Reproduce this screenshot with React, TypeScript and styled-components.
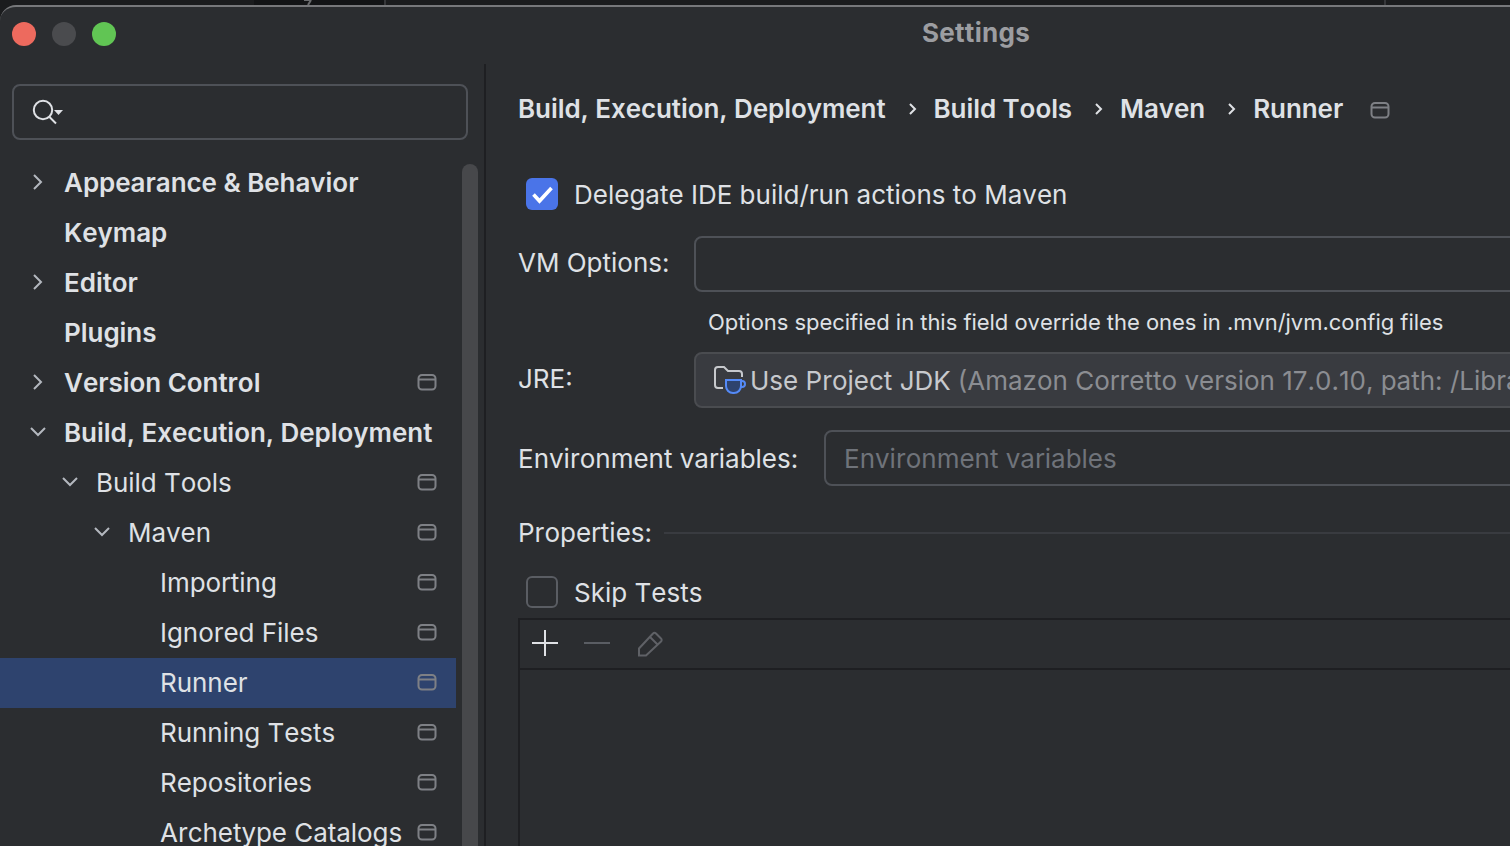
import React from 'react';
import styled, { createGlobalStyle } from 'styled-components';

const Global = createGlobalStyle`
  html, body { margin: 0; padding: 0; background: #1b1c1e; overflow: hidden; }
  * { box-sizing: border-box; }
`;

const Page = styled.div`
  width: 1510px; height: 846px; overflow: hidden; display: flex; flex-direction: column;
  font-family: Inter, "Noto Sans", sans-serif; font-size: 26px; color: #dfe1e5; background: #1b1c1e; font-kerning: none;
`;
const BackStrip = styled.div`height: 5px; flex: none; display: flex; background: #1b1c1e;`;
const StripCell = styled.div<{ $w: number; $dark?: boolean; $line?: boolean }>`
  width: ${p => p.$w}px; height: 5px; flex: none; overflow: hidden; padding-left: 48px;
  background: ${p => (p.$dark ? '#131416' : 'transparent')};
  border-right: ${p => (p.$line ? '2px solid #36373a' : 'none')};
`;
const Win = styled.div`
  flex: 1; min-height: 0; display: flex; flex-direction: column; background: #2b2d30;
  border-top: 2px solid #77787b; border-top-left-radius: 16px; overflow: hidden;
`;
const TitleBar = styled.div`height: 57px; flex: none; position: relative; display: flex; align-items: center; padding-left: 12px; gap: 16px;`;
const Light = styled.span<{ $c: string }>`width: 24px; height: 24px; border-radius: 50%; background: ${p => p.$c}; flex: none; position: relative; top: -2px;`;
const Title = styled.div`
  position: absolute; left: 484px; right: 0; top: 10px; text-align: center; line-height: 32px; font-weight: 700; color: #9c9da1; padding-right: 42px; letter-spacing: 0.3px;
`;
const Body = styled.div`flex: 1; min-height: 0; display: flex;`;
const Sidebar = styled.aside`width: 486px; flex: none; border-right: 2px solid #1e1f22; display: flex; flex-direction: column; padding-top: 20px; overflow: hidden;`;
const Search = styled.div`
  margin-left: 12px; width: 456px; height: 56px; flex: none; border: 2px solid #4e5157; border-radius: 8px;
  display: flex; align-items: center; padding-left: 17px;
`;
const TreeWrap = styled.div`flex: 1; min-height: 0; display: flex; margin-top: 18px;`;
const Tree = styled.div`width: 456px; flex: none;`;
const Row = styled.div<{ $sel?: boolean; $depth: number }>`
  height: 50px; display: flex; align-items: center; padding-left: ${p => 64 + p.$depth * 32}px; position: relative;
  background: ${p => (p.$sel ? '#2e436e' : 'transparent')}; white-space: nowrap;
`;
const RowLabel = styled.span<{ $b?: boolean }>`font-weight: ${p => (p.$b ? 600 : 400)}; line-height: 32px; letter-spacing: -0.04px;`;
const Arrow = styled.svg<{ $depth: number }>`position: absolute; left: ${p => 28 + p.$depth * 32}px; top: 14px; width: 20px; height: 20px;`;
const Pin = styled.svg`position: absolute; left: 417px; top: 14px; width: 20px; height: 20px;`;
const Scroll = styled.div`width: 16px; margin-left: 6px; margin-top: 6px; background: #47484b; border-radius: 8px 8px 0 0;`;

const Main = styled.main`flex: 1; min-width: 0; overflow: hidden; padding: 25px 0 0 32px; display: flex; flex-direction: column;`;
const Crumbs = styled.div`display: flex; align-items: center; height: 40px; font-weight: 600; white-space: nowrap; letter-spacing: -0.07px;`;
const Crumb = styled.span`line-height: 32px;`;
const Sep = styled.svg`width: 16px; height: 16px; margin: 0 13px 0 19px; flex: none;`;
const CrumbPin = styled.svg`width: 20px; height: 20px; margin-left: 27px; position: relative; top: 1px;`;
const CheckRow = styled.div<{ $top: number }>`display: flex; align-items: center; gap: 16px; padding-left: 8px; height: 32px; flex: none; margin-top: ${p => p.$top}px; white-space: nowrap;`;
const Box = styled.span<{ $on?: boolean }>`
  width: 32px; height: 32px; border-radius: 6px; flex: none; display: flex; align-items: center; justify-content: center;
  background: ${p => (p.$on ? '#4a74e8' : 'transparent')}; border: ${p => (p.$on ? 'none' : '2px solid #5a5d63')};
`;
const FieldRow = styled.div<{ $top: number }>`display: flex; align-items: center; height: 56px; flex: none; margin-top: ${p => p.$top}px; white-space: nowrap;`;
const FieldLabel = styled.label<{ $w: number; $up?: number }>`width: ${p => p.$w}px; flex: none; position: relative; top: ${p => -(p.$up ?? 0)}px;`;
const Field = styled.div<{ $combo?: boolean }>`
  flex: 1; min-width: 0; height: 56px; margin-right: -24px; border-radius: 8px; border: 2px solid ${p => (p.$combo ? '#4a4c50' : '#4e5157')};
  background: ${p => (p.$combo ? '#393b40' : 'transparent')}; display: flex; align-items: center; padding-left: 18px; overflow: hidden;
`;
const Help = styled.div`font-size: 22px; line-height: 30px; margin: 15px 0 0 190px; white-space: nowrap; flex: none; letter-spacing: -0.04px;`;
const Hint = styled.span`color: #6f737a;`;
const Muted = styled.span`color: #8b8d92; margin-left: 7px;`;
const ComboText = styled.span`color: #c7c9cd; margin-left: 4px; white-space: nowrap;`;
const PropRow = styled.div`display: flex; align-items: center; margin-top: 31px; height: 32px; gap: 12px; flex: none;`;
const PropLabel = styled.span`position: relative; top: -1px;`;
const Rule = styled.div`flex: 1; height: 2px; background: #393b40;`;
const Table = styled.div`margin-top: 10px; margin-right: -24px; flex: 1; border: 2px solid #1e1f22; border-bottom: none;`;
const TableBar = styled.div`height: 50px; padding-bottom: 2px; border-bottom: 2px solid #1e1f22; display: flex; align-items: center; padding-left: 11px; gap: 24px;`;
const Tool = styled.svg`width: 28px; height: 28px; flex: none;`;

const ArrowIcon = ({ open, depth }: { open?: boolean; depth: number }) => (
  <Arrow $depth={depth} viewBox="0 0 20 20" fill="none" stroke="#b4b8bf" strokeWidth="2">
    {open ? <path d="M3 6l7 7 7-7" /> : <path d="M6 3l7 7-7 7" />}
  </Arrow>
);
const pinPaths = (
  <>
    <rect x="1.5" y="3" width="17" height="14.5" rx="3.5" />
    <path d="M1.5 7.5h17" />
  </>
);
const PinIcon = () => (
  <Pin viewBox="0 0 20 20" fill="none" stroke="#7e8085" strokeWidth="2">{pinPaths}</Pin>
);

type Item = { label: string; depth: number; bold?: boolean; arrow?: 'open' | 'closed'; pin?: boolean; sel?: boolean };
const items: Item[] = [
  { label: 'Appearance & Behavior', depth: 0, bold: true, arrow: 'closed' },
  { label: 'Keymap', depth: 0, bold: true },
  { label: 'Editor', depth: 0, bold: true, arrow: 'closed' },
  { label: 'Plugins', depth: 0, bold: true },
  { label: 'Version Control', depth: 0, bold: true, arrow: 'closed', pin: true },
  { label: 'Build, Execution, Deployment', depth: 0, bold: true, arrow: 'open' },
  { label: 'Build Tools', depth: 1, arrow: 'open', pin: true },
  { label: 'Maven', depth: 2, arrow: 'open', pin: true },
  { label: 'Importing', depth: 3, pin: true },
  { label: 'Ignored Files', depth: 3, pin: true },
  { label: 'Runner', depth: 3, pin: true, sel: true },
  { label: 'Running Tests', depth: 3, pin: true },
  { label: 'Repositories', depth: 3, pin: true },
  { label: 'Archetype Catalogs', depth: 3, pin: true },
];

const crumbs = ['Build, Execution, Deployment', 'Build Tools', 'Maven', 'Runner'];

export default function App() {
  return (
    <Page>
      <Global />
      <BackStrip>
        <StripCell $w={254} />
        <StripCell $dark $line $w={132}>
          <svg width="12" height="5" viewBox="0 0 12 5" fill="none" stroke="#6a6b6e" strokeWidth="2" aria-hidden="true" style={{ display: 'block' }}>
            <path d="M2 0l6 0 0 0M9 0l-3 5" />
          </svg>
        </StripCell>
        <StripCell $line $w={1000} />
      </BackStrip>
      <Win>
        <TitleBar>
          <Light $c="#ed6a5e" />
          <Light $c="#4a4b4e" />
          <Light $c="#61c554" />
          <Title>Settings</Title>
        </TitleBar>
        <Body>
          <Sidebar>
            <Search>
              <svg width="36" height="28" viewBox="0 0 36 28" fill="none" aria-hidden="true">
                <circle cx="12" cy="12" r="9.2" stroke="#dfe1e5" strokeWidth="2" />
                <path d="M18.5 19l6.5 6.5" stroke="#dfe1e5" strokeWidth="2" />
                <path d="M23 12h9l-4.5 5z" fill="#dfe1e5" />
              </svg>
            </Search>
            <TreeWrap>
              <Tree>
                {items.map(it => (
                  <Row key={it.label} $depth={it.depth} $sel={it.sel}>
                    {it.arrow && <ArrowIcon open={it.arrow === 'open'} depth={it.depth} />}
                    <RowLabel $b={it.bold}>{it.label}</RowLabel>
                    {it.pin && <PinIcon />}
                  </Row>
                ))}
              </Tree>
              <Scroll />
            </TreeWrap>
          </Sidebar>
          <Main>
            <Crumbs>
              {crumbs.map((c, i) => (
                <React.Fragment key={c}>
                  {i > 0 && (
                    <Sep viewBox="0 0 16 16" fill="none" stroke="#dfe1e5" strokeWidth="2">
                      <path d="M5 3l5 5-5 5" />
                    </Sep>
                  )}
                  <Crumb>{c}</Crumb>
                </React.Fragment>
              ))}
              <CrumbPin viewBox="0 0 20 20" fill="none" stroke="#7e8085" strokeWidth="2">{pinPaths}</CrumbPin>
            </Crumbs>
            <CheckRow $top={49}>
              <Box $on>
                <svg width="32" height="32" viewBox="0 0 32 32" fill="none" stroke="#fff" strokeWidth="3.6" aria-hidden="true">
                  <path d="M7.5 16.5l6 6.5L25.5 10" />
                </svg>
              </Box>
              <span>Delegate IDE build/run actions to Maven</span>
            </CheckRow>
            <FieldRow $top={26}>
              <FieldLabel $w={176} $up={2}>VM Options:</FieldLabel>
              <Field />
            </FieldRow>
            <Help>Options specified in this field override the ones in .mvn/jvm.config files</Help>
            <FieldRow $top={15}>
              <FieldLabel $w={176} $up={2}>JRE:</FieldLabel>
              <Field $combo>
                <svg width="32" height="30" viewBox="0 0 32 30" fill="none" aria-hidden="true" style={{ flex: 'none' }}>
                  <path d="M9 23H4a3 3 0 0 1-3-3V5a3 3 0 0 1 3-3h6l4 4h11a3 3 0 0 1 3 3v3" stroke="#c7c9cd" strokeWidth="2" />
                  <path d="M12 15h15v6a7 7 0 0 1-7 7h-1a7 7 0 0 1-7-7z" fill="#2e436e" stroke="#548af7" strokeWidth="2" />
                  <path d="M27 16h1a3 3 0 0 1 0 6h-1" stroke="#548af7" strokeWidth="2" />
                </svg>
                <ComboText>Use Project JDK<Muted>(Amazon Corretto version 17.0.10, path: /Library/Java/JavaVirtualMachines)</Muted></ComboText>
              </Field>
            </FieldRow>
            <FieldRow $top={22}>
              <FieldLabel $w={306}>Environment variables:</FieldLabel>
              <Field><Hint>Environment variables</Hint></Field>
            </FieldRow>
            <PropRow>
              <PropLabel>Properties:</PropLabel>
              <Rule />
            </PropRow>
            <CheckRow $top={27}>
              <Box />
              <span>Skip Tests</span>
            </CheckRow>
            <Table>
              <TableBar>
                <Tool viewBox="0 0 28 28" fill="none" stroke="#dfe1e5" strokeWidth="2"><path d="M14 1v26M1 14h26" /></Tool>
                <Tool viewBox="0 0 28 28" fill="none" stroke="#5a5d63" strokeWidth="2"><path d="M1 14h26" /></Tool>
                <Tool viewBox="0 0 28 28" fill="none" stroke="#5f6166" strokeWidth="2"><path d="M4 26.5v-7L18 4.5a2 2 0 0 1 3 0l5 5a2 2 0 0 1 0 3L11 26.5zM15 8l7.5 7.5" /></Tool>
              </TableBar>
            </Table>
          </Main>
        </Body>
      </Win>
    </Page>
  );
}
